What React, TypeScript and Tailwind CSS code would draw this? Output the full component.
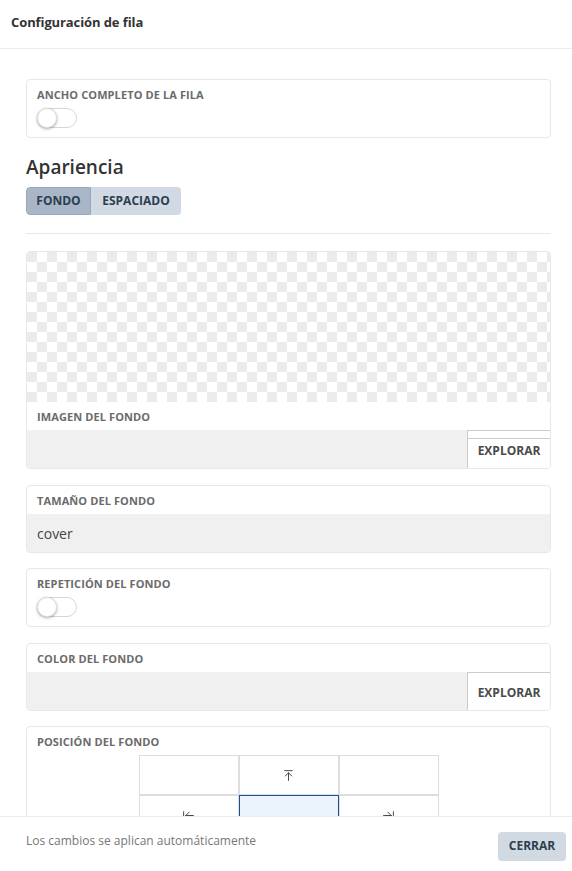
import React from "react";
import { ArrowUpToLine, ArrowLeftToLine, ArrowRightToLine } from "lucide-react";

const font = { fontFamily: '"Open Sans", "Noto Sans", sans-serif' };

function Label({ children }: { children: React.ReactNode }) {
  return (
    <div className="h-[28px] px-[10px] pt-[2px] flex items-center text-[11px] font-bold uppercase text-[#6b6b6b] tracking-[0.1px]">
      {children}
    </div>
  );
}

function Toggle() {
  return (
    <div className="ml-[10px] w-[40px] h-[20px] rounded-full border border-[#d9d6d0] bg-white relative">
      <div className="absolute left-[-1px] top-[-1px] w-[20px] h-[20px] rounded-full bg-white border border-[#e2e0dc] shadow-[0_1px_3px_rgba(0,0,0,0.35)]" />
    </div>
  );
}

function Card({ children, className = "" }: { children: React.ReactNode; className?: string }) {
  return (
    <div className={"border border-[#e8e8e8] rounded-[4px] bg-white overflow-hidden " + className}>{children}</div>
  );
}

function ExploreRow({ doubleLine }: { doubleLine?: boolean }) {
  return (
    <div className="flex h-[38px] bg-[#f0f0f0]">
      <div className="flex-1" />
      <div className="relative w-[83px] bg-white border-l border-t border-[#cccccc] flex items-center justify-center text-[12px] font-bold text-[#4a4a4a]">
        {doubleLine && <div className="absolute left-0 right-0 top-0 h-[8px] border-b border-[#cccccc]" />}
        <span className="pt-[2px]">EXPLORAR</span>
      </div>
    </div>
  );
}

export default function App() {
  return (
    <div className="w-[572px] h-[871px] flex flex-col bg-white text-[#333]" style={font}>
      <div className="h-[49px] shrink-0 border-b border-[#ececec] flex items-center px-[11px] pb-[2px]">
        <span className="text-[13px] font-bold text-[#333] tracking-[-0.1px]">Configuración de fila</span>
      </div>

      <div className="flex-1 overflow-hidden pl-[26px] pr-[21px] pt-[30px]">
        <Card className="pb-[9px]">
          <Label>Ancho completo de la fila</Label>
          <Toggle />
        </Card>

        <div className="mt-[16px] text-[19px] font-semibold text-[#333] leading-[26px]">Apariencia</div>

        <div className="mt-[7px] flex w-fit rounded-[4px] overflow-hidden text-[12px] font-bold text-[#2c3e50]">
          <div className="h-[28px] w-[65px] flex items-center justify-center bg-[#a9b6c8] border border-[#9aa8bb] rounded-l-[4px]">FONDO</div>
          <div className="h-[28px] w-[90px] flex items-center justify-center bg-[#d1d9e3]">ESPACIADO</div>
        </div>

        <div className="mt-[18px] border-t border-[#e8e8e8]" />

        <Card className="mt-[17px]">
          <div className="h-[150px] bg-[conic-gradient(white_25%,#ebebeb_0_50%,white_0_75%,#ebebeb_0)] bg-[length:20px_20px]" />
          <Label>Imagen del fondo</Label>
          <ExploreRow doubleLine />
        </Card>

        <Card className="mt-[16px]">
          <Label>Tamaño del fondo</Label>
          <div className="h-[38px] bg-[#f0f0f0] flex items-center px-[10px] pt-[1px] text-[14px] text-[#444]">cover</div>
        </Card>

        <Card className="mt-[15px] pb-[9px]">
          <Label>Repetición del fondo</Label>
          <Toggle />
        </Card>

        <Card className="mt-[16px]">
          <Label>Color del fondo</Label>
          <ExploreRow />
        </Card>

        <Card className="mt-[15px] pb-[10px]">
          <Label>Posición del fondo</Label>
          <div className="mx-auto grid grid-cols-3 w-[300px]">
            <div className="h-[40px] border border-[#dddddd]" />
            <div className="h-[40px] border border-[#dddddd] flex items-center justify-center text-[#444]">
              <ArrowUpToLine size={13} strokeWidth={1.8} />
            </div>
            <div className="h-[40px] border border-[#dddddd]" />
            <div className="h-[40px] border border-[#dddddd] flex items-center justify-center text-[#444]">
              <ArrowLeftToLine size={13} strokeWidth={1.8} />
            </div>
            <div className="h-[40px] border border-[#1d4f9e] bg-[#ebf3fd]" />
            <div className="h-[40px] border border-[#dddddd] flex items-center justify-center text-[#444]">
              <ArrowRightToLine size={13} strokeWidth={1.8} />
            </div>
            <div className="h-[40px] border border-[#dddddd]" />
            <div className="h-[40px] border border-[#dddddd]" />
            <div className="h-[40px] border border-[#dddddd]" />
          </div>
        </Card>
      </div>

      <div className="h-[55px] shrink-0 border-t border-[#ececec] flex items-center justify-between pl-[26px] pr-[6px]">
        <span className="text-[12px] text-[#777] pb-[6px]">Los cambios se aplican automáticamente</span>
        <div className="mt-[4px] h-[29px] w-[68px] rounded-[4px] bg-[#d1d9e3] flex items-center justify-center text-[12px] font-bold text-[#2c3e50]">CERRAR</div>
      </div>
    </div>
  );
}
